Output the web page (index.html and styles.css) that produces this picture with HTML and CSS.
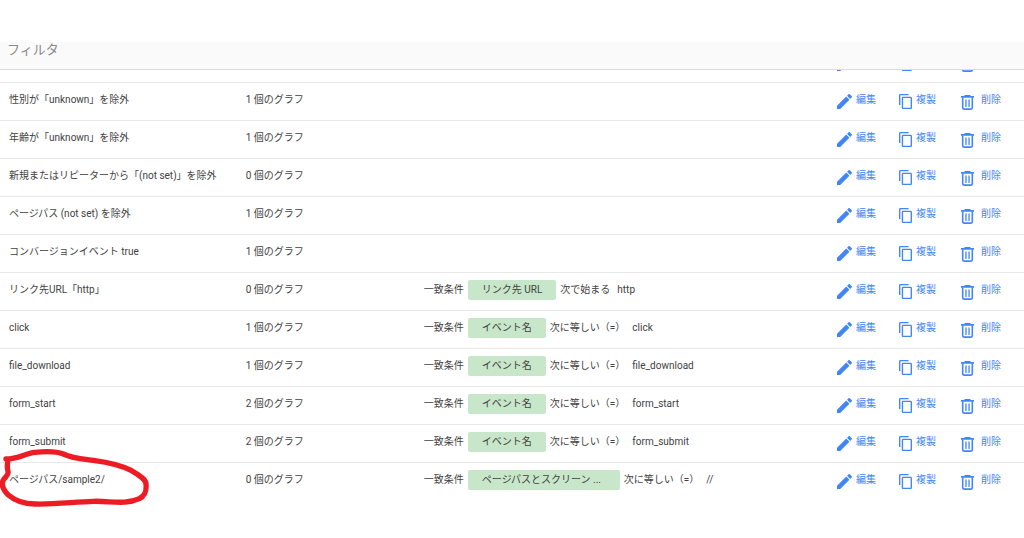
FILE: index.html
```html
<!DOCTYPE html>
<html lang="ja">
<head>
<meta charset="utf-8">
<title>フィルタ</title>
<link rel="stylesheet" href="styles.css">
</head>
<body>
<svg class="sprite" aria-hidden="true">
  <symbol id="edit" viewBox="3 3 18 18"><path d="M3 17.200V21h3.800L17.900 9.900l-3.800-3.800L3 17.200zM20.700 7.040a1 1 0 0 0 0-1.410l-2.340-2.340a1 1 0 0 0-1.410 0l-1.830 1.830 3.750 3.750 1.830-1.830z"/></symbol>
  <symbol id="copy" viewBox="2 1 19 22"><path d="M16 1H4c-1.100 0-2 .9-2 2v14h2V3h12V1zm3 4H8c-1.100 0-2 .9-2 2v14c0 1.100.9 2 2 2h11c1.100 0 2-.9 2-2V7c0-1.100-.9-2-2-2zm0 16H8V7h11v14z"/></symbol>
  <symbol id="trash" viewBox="0 0 13 15"><path d="M3.500 0h6v1H13v1.700H0V1h3.500z"/><path d="M1.700 2.500v10.300q0 1.300 1.300 1.300h7q1.300 0 1.300-1.300V2.500" fill="none" stroke="currentColor" stroke-width="1.600"/><path d="M4.300 4.500h1.300v7.500H4.300zM7.400 4.500h1.300v7.500H7.400z"/></symbol>
</svg>
<main class="page">
  <h1 class="title">フィルタ</h1>
  <div class="list">
    <table class="filters">
      <colgroup><col class="col-name"><col class="col-count"><col><col class="col-actions"></colgroup>
      <tbody>
      <tr><td></td><td></td><td></td><td><div class="actions"><button aria-label="編集"><svg class="i-edit"><use href="#edit"/></svg></button><button aria-label="複製"><svg class="i-copy"><use href="#copy"/></svg></button><button aria-label="削除"><svg class="i-trash"><use href="#trash"/></svg></button></div></td></tr>
      <tr><td>性別が「unknown」を除外</td><td>1 個のグラフ</td><td></td><td><div class="actions"><button><svg class="i-edit"><use href="#edit"/></svg>編集</button><button><svg class="i-copy"><use href="#copy"/></svg>複製</button><button><svg class="i-trash"><use href="#trash"/></svg>削除</button></div></td></tr>
      <tr><td>年齢が「unknown」を除外</td><td>1 個のグラフ</td><td></td><td><div class="actions"><button><svg class="i-edit"><use href="#edit"/></svg>編集</button><button><svg class="i-copy"><use href="#copy"/></svg>複製</button><button><svg class="i-trash"><use href="#trash"/></svg>削除</button></div></td></tr>
      <tr><td>新規またはリピーターから「(not set)」を除外</td><td>0 個のグラフ</td><td></td><td><div class="actions"><button><svg class="i-edit"><use href="#edit"/></svg>編集</button><button><svg class="i-copy"><use href="#copy"/></svg>複製</button><button><svg class="i-trash"><use href="#trash"/></svg>削除</button></div></td></tr>
      <tr><td>ページパス (not set) を除外</td><td>1 個のグラフ</td><td></td><td><div class="actions"><button><svg class="i-edit"><use href="#edit"/></svg>編集</button><button><svg class="i-copy"><use href="#copy"/></svg>複製</button><button><svg class="i-trash"><use href="#trash"/></svg>削除</button></div></td></tr>
      <tr><td>コンバージョンイベント true</td><td>1 個のグラフ</td><td></td><td><div class="actions"><button><svg class="i-edit"><use href="#edit"/></svg>編集</button><button><svg class="i-copy"><use href="#copy"/></svg>複製</button><button><svg class="i-trash"><use href="#trash"/></svg>削除</button></div></td></tr>
      <tr><td>リンク先URL「http」</td><td>0 個のグラフ</td><td><div class="rule"><span>一致条件</span><span class="chip">リンク先 URL</span><span class="operator">次で始まる</span><span>http</span></div></td><td><div class="actions"><button><svg class="i-edit"><use href="#edit"/></svg>編集</button><button><svg class="i-copy"><use href="#copy"/></svg>複製</button><button><svg class="i-trash"><use href="#trash"/></svg>削除</button></div></td></tr>
      <tr><td>click</td><td>1 個のグラフ</td><td><div class="rule"><span>一致条件</span><span class="chip">イベント名</span><span class="operator">次に等しい（=）</span><span>click</span></div></td><td><div class="actions"><button><svg class="i-edit"><use href="#edit"/></svg>編集</button><button><svg class="i-copy"><use href="#copy"/></svg>複製</button><button><svg class="i-trash"><use href="#trash"/></svg>削除</button></div></td></tr>
      <tr><td>file_download</td><td>1 個のグラフ</td><td><div class="rule"><span>一致条件</span><span class="chip">イベント名</span><span class="operator">次に等しい（=）</span><span>file_download</span></div></td><td><div class="actions"><button><svg class="i-edit"><use href="#edit"/></svg>編集</button><button><svg class="i-copy"><use href="#copy"/></svg>複製</button><button><svg class="i-trash"><use href="#trash"/></svg>削除</button></div></td></tr>
      <tr><td>form_start</td><td>2 個のグラフ</td><td><div class="rule"><span>一致条件</span><span class="chip">イベント名</span><span class="operator">次に等しい（=）</span><span>form_start</span></div></td><td><div class="actions"><button><svg class="i-edit"><use href="#edit"/></svg>編集</button><button><svg class="i-copy"><use href="#copy"/></svg>複製</button><button><svg class="i-trash"><use href="#trash"/></svg>削除</button></div></td></tr>
      <tr><td>form_submit</td><td>2 個のグラフ</td><td><div class="rule"><span>一致条件</span><span class="chip">イベント名</span><span class="operator">次に等しい（=）</span><span>form_submit</span></div></td><td><div class="actions"><button><svg class="i-edit"><use href="#edit"/></svg>編集</button><button><svg class="i-copy"><use href="#copy"/></svg>複製</button><button><svg class="i-trash"><use href="#trash"/></svg>削除</button></div></td></tr>
      <tr><td>ページパス/sample2/</td><td>0 個のグラフ</td><td><div class="rule"><span>一致条件</span><span class="chip chip-long">ページパスとスクリーン ...</span><span class="operator">次に等しい（=）</span><span>//</span></div></td><td><div class="actions"><button><svg class="i-edit"><use href="#edit"/></svg>編集</button><button><svg class="i-copy"><use href="#copy"/></svg>複製</button><button><svg class="i-trash"><use href="#trash"/></svg>削除</button></div></td></tr>
      </tbody>
    </table>
  </div>
  <svg class="ring" viewBox="0 0 450 210" aria-hidden="true"><path d="M18 57C55 57 75 40 105 37C135 34 170 34 190 42C220 56 250 57 280 61C325 67 365 76 395 92C420 107 438 118 438 132C440 153 436 166 418 176C375 196 330 182 280 184C220 186 160 194 105 192C60 191 40 178 25 165C7 147 5 130 10 120C16 109 27 106 24 94C20 82 22 72 24 57"/></svg>
</main>
</body>
</html>
```

FILE: styles.css
```css
body {
  margin: 0;
  background: #fff;
  color: #424242;
  font: 10px/16px Roboto, "Noto Sans CJK JP", sans-serif;
}

.sprite {
  display: none;
}

.page {
  position: relative;
  box-sizing: border-box;
  min-height: 100vh;
  padding-top: 42px;
}

.title {
  margin: 0;
  padding: 0 7px 11px;
  background: #fafafa;
  border-bottom: 1px solid #dcdcdc;
  color: #8a8a8a;
  font-size: 13px;
  font-weight: 400;
  line-height: 16px;
}

.list {
  overflow: hidden;
}

.filters {
  width: 100%;
  margin-top: -25px;
  border-collapse: separate;
  border-spacing: 0;
  table-layout: fixed;
}

.col-name {
  width: 24%;
}

.col-count {
  width: 17%;
}

.col-actions {
  width: 187px;
}

td {
  height: 34px;
  padding: 0 0 3px;
  border-bottom: 1px solid #e8e8e8;
  vertical-align: middle;
  white-space: nowrap;
}

td:first-child {
  padding-left: 9px;
}

tr:last-child td {
  border-bottom: 0;
}

.rule {
  display: flex;
  align-items: center;
  gap: 4px;
  padding-left: 4px;
}

.chip {
  padding: 2px 14px;
  border-radius: 2px;
  background: #c8e6c9;
}

.chip-long {
  width: 124px;
}

.operator {
  padding-right: 3px;
}

.actions {
  display: grid;
  grid-template-columns: repeat(3, 62px);
}

button {
  display: flex;
  align-items: center;
  gap: 4px;
  padding: 0;
  border: 0;
  background: none;
  color: #4285f4;
  font: inherit;
  cursor: pointer;
}

button svg {
  flex: none;
  height: 15px;
  margin-top: 2px;
  fill: currentColor;
}

.i-edit {
  width: 15px;
}

.i-copy {
  width: 13px;
}

button .i-trash {
  width: 13px;
  margin: 5px 3px 0 0;
}

.ring {
  position: absolute;
  top: 440px;
  left: 0;
  width: 150px;
  height: 70px;
  fill: none;
  stroke: #ed1c24;
  stroke-width: 16;
  stroke-linecap: round;
  stroke-linejoin: round;
  pointer-events: none;
}
```
